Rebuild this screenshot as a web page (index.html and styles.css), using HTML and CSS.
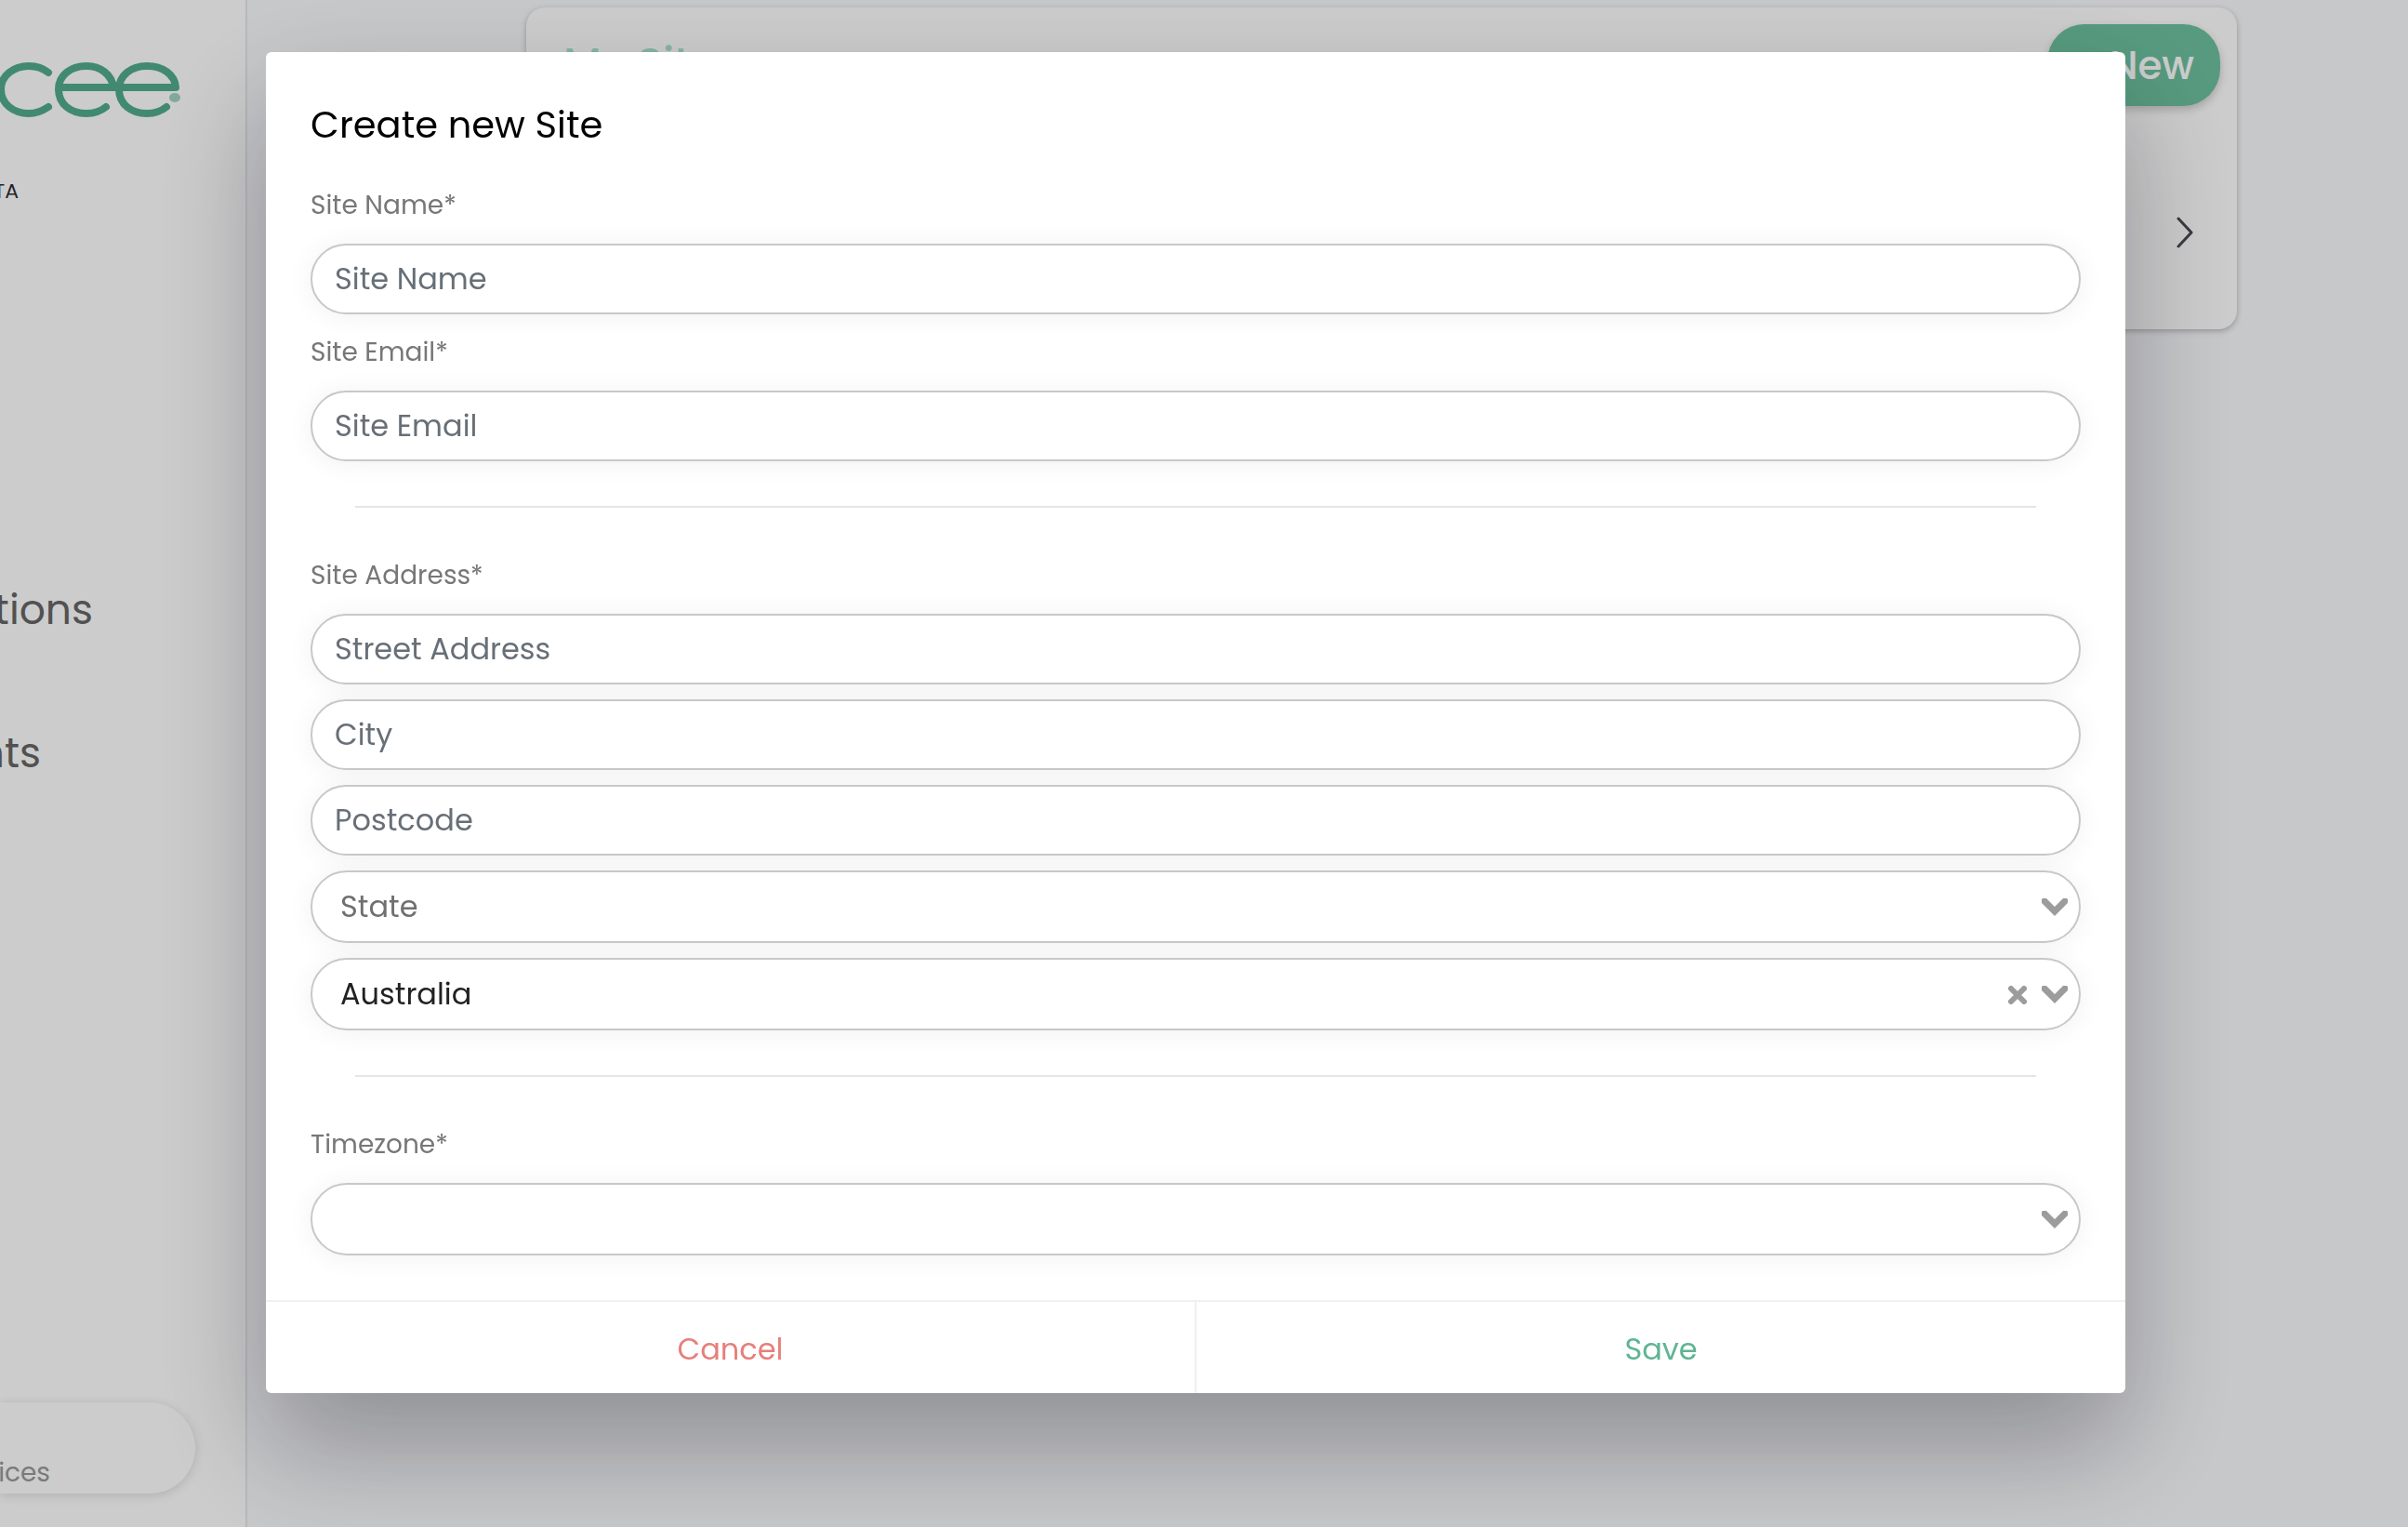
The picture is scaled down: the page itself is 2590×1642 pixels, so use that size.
FILE: index.html
```html
<!DOCTYPE html>
<html lang="en">
<head>
<meta charset="utf-8">
<title>Create new Site</title>
<link rel="stylesheet" href="styles.css">
</head>
<body>
<div class="app">
  <aside class="sidebar">
    <svg class="logo" viewBox="0 0 200 68" role="img" aria-label="cee">
      <g fill="none" stroke="#52ad8e" stroke-width="8" stroke-linecap="round" stroke-linejoin="round">
        <path d="M52 16C46 11 39 9 31 9C15 9 1 19 1 34C1 50 15 60 31 60C39 60 46 57 52 53"/>
        <path d="M64 32H122C120 18 108 9 93 9C76 9 63 19 63 34C63 50 76 60 93 60C101 60 109 57 114 53"/>
        <path d="M124 32H189C188 18 175 9 158 9C141 9 128 19 128 34C128 50 141 60 158 60C166 60 174 57 179 53"/>
      </g>
      <ellipse cx="188" cy="43" rx="6" ry="5" fill="#a3d3c2"/>
    </svg>
    <p class="badge-text">TA</p>
    <nav class="nav">
      <a class="nav-link" href="#">tions</a>
      <a class="nav-link nav-link-short" href="#">nts</a>
    </nav>
    <div class="pill"><span class="pill-text">vices</span></div>
  </aside>
  <main class="main">
    <section class="card">
      <header class="card-head">
        <h1 class="card-title">My Sites</h1>
        <button class="new-button" type="button">New</button>
      </header>
      <a class="card-row" href="#" aria-label="Open site">
        <svg class="row-arrow" viewBox="0 0 20 36"><path d="M3 3L17 18L3 33"/></svg>
      </a>
    </section>
  </main>
</div>
<div class="backdrop">
  <form class="modal" role="dialog" aria-labelledby="modal-title">
    <div class="modal-body">
      <h2 class="modal-title" id="modal-title">Create new Site</h2>
      <div class="group">
        <label class="label" for="name">Site Name*</label>
        <input class="field" id="name" type="text" placeholder="Site Name">
      </div>
      <div class="group">
        <label class="label" for="email">Site Email*</label>
        <input class="field" id="email" type="email" placeholder="Site Email">
      </div>
      <hr class="rule">
      <div class="group">
        <label class="label" for="street">Site Address*</label>
        <div class="stack">
          <input class="field" id="street" type="text" placeholder="Street Address">
          <input class="field" type="text" placeholder="City" aria-label="City">
          <input class="field" type="text" placeholder="Postcode" aria-label="Postcode">
          <div class="picker">
            <select class="field select select-empty" aria-label="State"><option>State</option></select>
            <svg class="chevron" viewBox="0 0 28 20"><path d="M3 3L14 14L25 3"/></svg>
          </div>
          <div class="picker">
            <select class="field select" aria-label="Country"><option>Australia</option></select>
            <button class="clear" type="button" aria-label="Clear country"><svg class="cross" viewBox="0 0 20 20"><path d="M3 3L17 17M17 3L3 17"/></svg></button>
            <svg class="chevron" viewBox="0 0 28 20"><path d="M3 3L14 14L25 3"/></svg>
          </div>
        </div>
      </div>
      <hr class="rule">
      <div class="group">
        <label class="label" for="timezone">Timezone*</label>
        <div class="picker">
          <select class="field select" id="timezone"><option></option></select>
          <svg class="chevron" viewBox="0 0 28 20"><path d="M3 3L14 14L25 3"/></svg>
        </div>
      </div>
    </div>
    <footer class="actions">
      <button class="action action-cancel" type="button">Cancel</button>
      <button class="action action-save" type="submit">Save</button>
    </footer>
  </form>
</div>
</body>
</html>
```
FILE: styles.css
```css
* { box-sizing: border-box; }
body {
  margin: 0;
  font-family: Poppins, Inter, "Liberation Sans", sans-serif;
  overflow: hidden;
}
button, input, select { font: inherit; margin: 0; }

.app {
  display: flex;
  min-height: 100vh;
  background: #f9fafc;
}
.sidebar {
  display: flex;
  flex-direction: column;
  align-items: flex-start;
  width: 266px;
  padding: 62px 0 36px;
  background: #fff;
  border-right: 2px solid #e6e7ea;
}
.logo { width: 200px; height: 68px; }
.badge-text {
  display: flex;
  justify-content: flex-end;
  width: 20px;
  margin: 60px 0 0;
  font-size: 22px;
  line-height: 32px;
  color: #2c2d33;
}
.nav {
  display: flex;
  flex-direction: column;
  margin-top: 402px;
  gap: 90px;
}
.nav-link {
  display: flex;
  justify-content: flex-end;
  width: 100px;
  font-size: 44px;
  line-height: 64px;
  color: #666;
  text-decoration: none;
}
.nav-link-short { width: 44px; }
.pill {
  display: flex;
  align-items: flex-end;
  width: 210px;
  height: 98px;
  margin-top: auto;
  padding-bottom: 2px;
  border-radius: 0 49px 49px 0;
  box-shadow: 0 2px 12px rgba(0, 0, 0, .14);
}
.pill-text {
  display: flex;
  justify-content: flex-end;
  width: 54px;
  font-size: 28px;
  line-height: 40px;
  color: #999;
}

.main { flex: 1; padding: 8px 184px 0 300px; }
.card {
  height: 346px;
  padding: 18px;
  border-radius: 20px;
  background: #fff;
  box-shadow: 0 2px 6px rgba(0, 0, 0, .26);
}
.card-head { display: flex; justify-content: space-between; }
.card-title {
  margin: 10px 0 0 22px;
  font-size: 46px;
  font-weight: 500;
  line-height: 64px;
  color: #a6e3cf;
}
.new-button {
  width: 186px;
  height: 88px;
  padding: 0 28px;
  border: 0;
  border-radius: 40px;
  background: #6dc19f;
  box-shadow: 0 4px 10px rgba(0, 0, 0, .2);
  color: #fff;
  font-size: 42px;
  font-weight: 500;
  text-align: right;
}
.card-row {
  display: flex;
  align-items: center;
  justify-content: flex-end;
  height: 200px;
  margin-top: 36px;
  padding-right: 28px;
}
.row-arrow {
  width: 20px;
  height: 36px;
  fill: none;
  stroke: #484950;
  stroke-width: 3;
  stroke-linecap: round;
  stroke-linejoin: round;
}

.backdrop {
  position: fixed;
  inset: 0;
  padding: 56px 304px 0 286px;
  background: rgba(0, 0, 0, .2);
}
.modal {
  border-radius: 6px;
  background: #fff;
  box-shadow: 0 56px 120px rgba(10, 10, 24, .3);
}
.modal-body { padding: 48px; }
.modal-title {
  margin: 0 0 32px;
  font-size: 40px;
  font-weight: 400;
  line-height: 60px;
  color: #000;
}
.group + .group { margin-top: 16px; }
.label {
  display: block;
  margin-bottom: 16px;
  font-size: 28px;
  line-height: 50px;
  color: #777;
}
.field {
  display: block;
  width: 100%;
  height: 76px;
  padding: 0 24px;
  border: 2px solid #c8c8c8;
  border-radius: 39px;
  background: #fff;
  box-shadow: 0 2px 30px rgba(0, 0, 0, .06);
  font-size: 32px;
  color: #222;
  outline: 0;
}
.field::placeholder { color: #676f77; opacity: 1; }
.stack { display: flex; flex-direction: column; gap: 16px; }
.picker { position: relative; }
.select {
  height: 78px;
  padding: 0 30px 2px;
  appearance: none;
}
.select-empty { color: #707070; }
.chevron {
  position: absolute;
  top: 30px;
  right: 14px;
  width: 28px;
  height: 20px;
  fill: none;
  stroke: #9c9c9c;
  stroke-width: 7;
  stroke-linecap: round;
  pointer-events: none;
}
.clear {
  position: absolute;
  top: 30px;
  right: 58px;
  display: flex;
  padding: 0;
  border: 0;
  background: none;
}
.cross {
  width: 20px;
  height: 20px;
  fill: none;
  stroke: #9c9c9c;
  stroke-width: 6;
  stroke-linecap: round;
}
.rule {
  height: 2px;
  margin: 48px;
  border: 0;
  background: #e6e6e6;
}
.actions { display: flex; border-top: 2px solid #f0f0f0; }
.action {
  flex: 1;
  height: 98px;
  padding: 4px 0 0;
  border: 0;
  background: none;
  font-size: 32px;
}
.action-cancel { border-right: 2px solid #f0f0f0; color: #e77f7b; }
.action-save { color: #60b593; }
```
